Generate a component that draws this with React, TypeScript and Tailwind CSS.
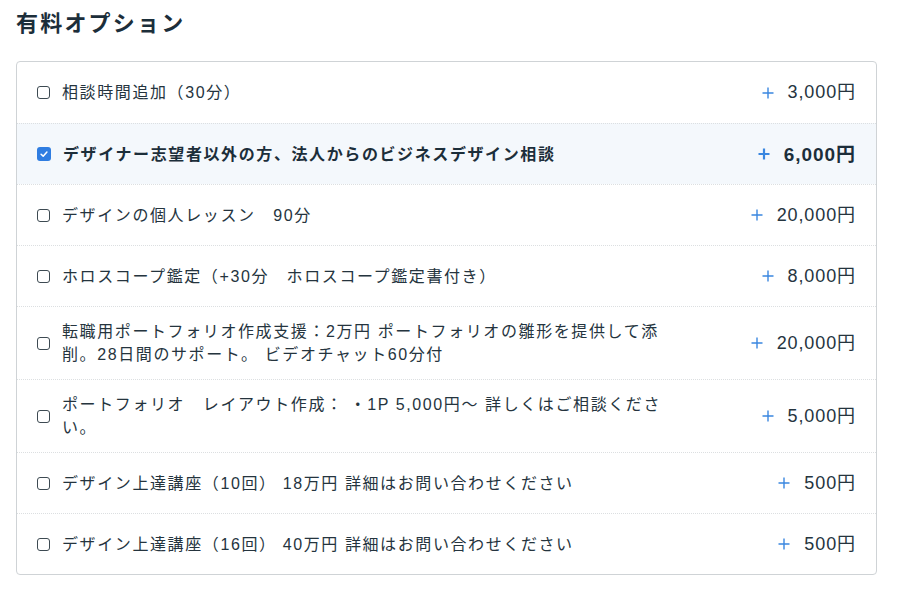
import React from 'react';

type Option = {
  label: string;
  price: string;
  checked?: boolean;
};

const options: Option[] = [
  { label: '相談時間追加（30分）', price: '3,000円' },
  { label: 'デザイナー志望者以外の方、法人からのビジネスデザイン相談', price: '6,000円', checked: true },
  { label: 'デザインの個人レッスン　90分', price: '20,000円' },
  { label: 'ホロスコープ鑑定（+30分　ホロスコープ鑑定書付き）', price: '8,000円' },
  { label: '転職用ポートフォリオ作成支援：2万円 ポートフォリオの雛形を提供して添削。28日間のサポート。 ビデオチャット60分付', price: '20,000円' },
  { label: 'ポートフォリオ　レイアウト作成： ・1P 5,000円〜 詳しくはご相談ください。', price: '5,000円' },
  { label: 'デザイン上達講座（10回） 18万円 詳細はお問い合わせください', price: '500円' },
  { label: 'デザイン上達講座（16回） 40万円 詳細はお問い合わせください', price: '500円' },
];

function Checkbox({ checked }: { checked?: boolean }) {
  if (checked) {
    return (
      <span className="flex h-[14px] w-[14px] shrink-0 items-center justify-center rounded-[3px] bg-[#2f7de1]">
        <svg viewBox="0 0 12 12" className="h-[10px] w-[10px]" fill="none" stroke="white" strokeWidth="1.8" strokeLinecap="round" strokeLinejoin="round">
          <path d="M2.5 6.3 L5 8.6 L9.5 3.6" />
        </svg>
      </span>
    );
  }
  return <span className="h-[13px] w-[13px] shrink-0 rounded-[3px] border-[1.5px] border-[#3d4a52] bg-white" />;
}

function Plus({ bold }: { bold?: boolean }) {
  return (
    <svg viewBox="0 0 12 12" className="h-[12px] w-[12px]" fill="none" stroke="#3a87e0" strokeWidth={bold ? 2.2 : 1.4}>
      <path d="M6 0.5 V11.5 M0.5 6 H11.5" />
    </svg>
  );
}

export default function App() {
  return (
    <div className="min-h-screen bg-white pl-4 pr-[21px] pt-[8px] font-['Liberation_Sans','Noto_Sans_CJK_JP',sans-serif] text-[#25343e]">
      <h2 className="text-[22px] font-bold leading-[32px] tracking-[0.1em] text-[#1c2e3a]">有料オプション</h2>
      <div className="mt-[21px] rounded-[4px] border border-[#cfd3d6]">
        {options.map((o, i) => (
          <div
            key={i}
            className={`flex min-h-[61px] items-center justify-between py-[13px] pl-[20px] pr-[20px] ${
              i > 0 ? 'border-t border-dotted border-[#dcdfe1]' : ''
            } ${o.checked ? 'bg-[#f4f8fc]' : ''}`}
          >
            <div className="flex items-center gap-[12px]">
              <Checkbox checked={o.checked} />
              <span
                className={`max-w-[608px] text-[16px] leading-[23px] tracking-[0.1em] ${
                  o.checked ? 'font-bold text-[#1c2e3a]' : ''
                }`}
              >
                {o.label}
              </span>
            </div>
            <div
              className={`flex shrink-0 items-center gap-[14px] tracking-[0.05em] ${
                o.checked ? 'text-[19px] font-bold text-[#1c2e3a]' : 'text-[18px]'
              }`}
            >
              <Plus bold={o.checked} />
              <span className="leading-[23px]">{o.price}</span>
            </div>
          </div>
        ))}
      </div>
    </div>
  );
}
